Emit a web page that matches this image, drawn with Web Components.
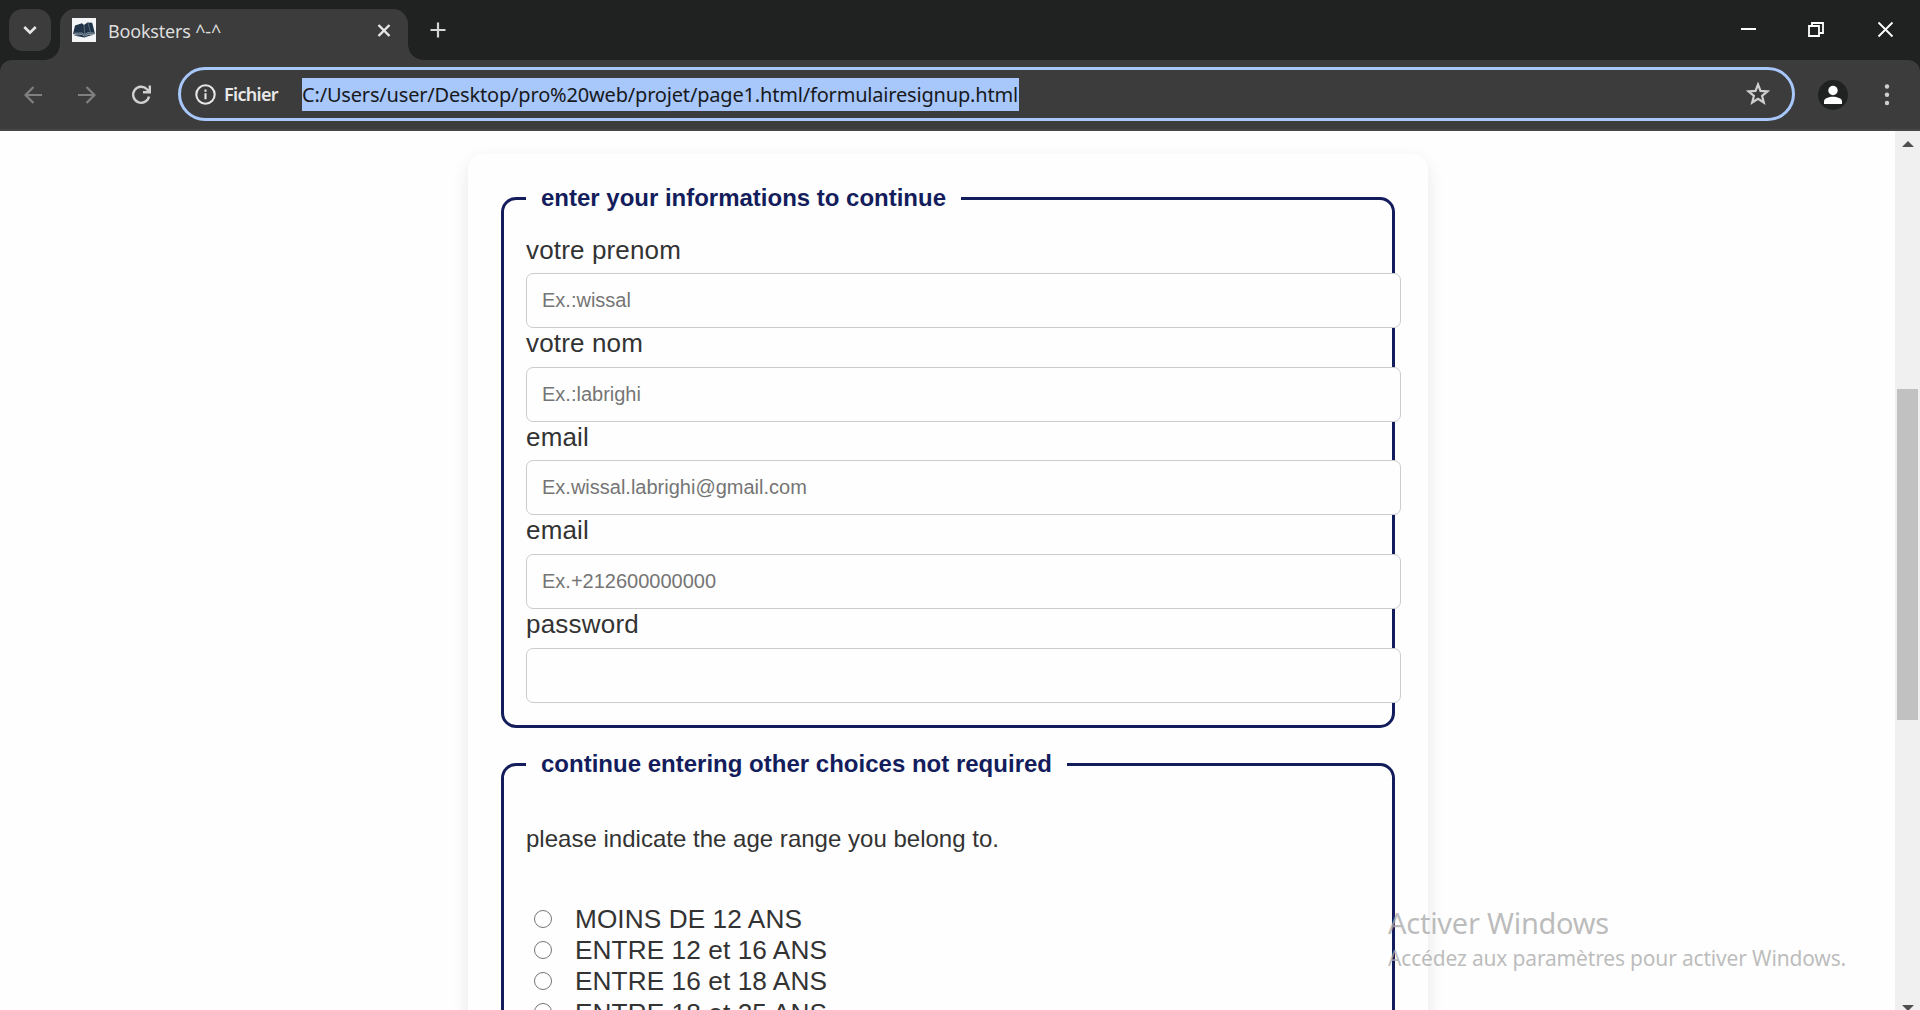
<!DOCTYPE html>
<html lang="fr">
<head>
<meta charset="utf-8">
<title>Booksters ^-^</title>
<style>
html,body{margin:0;height:100%;overflow:hidden;background:#fefefe}
</style>
</head>
<body>
<browser-window></browser-window>
<script>
class BaseElement extends HTMLElement {
  constructor() {
    super();
    this.attachShadow({ mode: 'open' }).innerHTML = this.constructor.markup;
  }
}

/* One line of text whose tracking is adjusted to fill the width given in "w". */
class FitText extends BaseElement {
  static markup = `<style>:host{display:block;white-space:nowrap}span{display:inline-block}</style><span><slot></slot></span>`;
  connectedCallback() {
    const span = this.shadowRoot.querySelector('span');
    const fit = () => {
      const n = this.textContent.length, w = +this.getAttribute('w');
      span.style.letterSpacing = '0px';
      const natural = span.getBoundingClientRect().width;
      if (natural) span.style.letterSpacing = (w - natural) / n + 'px';
    };
    fit();
    requestAnimationFrame(fit);
  }
}

class TabStrip extends BaseElement {
  static markup = `<style>
  :host{display:flex;height:60px;background:#202221;box-sizing:border-box;padding-left:9px;font-family:"Noto Sans",sans-serif;color:#dedede}
  .search{width:42px;height:42px;margin-top:9px;border-radius:14px;background:#3c3c3c;flex:none}
  .tab{position:relative;width:348px;height:51px;margin:9px 0 0 9px;border-radius:15px 15px 0 0;background:#3c3c3c;display:flex;box-sizing:border-box;padding:9px 15px 0 12px;flex:none}
  .tab::before,.tab::after{content:"";position:absolute;bottom:0;width:15px;height:15px}
  .tab::before{left:-15px;background:radial-gradient(circle at 0 0,transparent 14.5px,#3c3c3c 15px)}
  .tab::after{right:-15px;background:radial-gradient(circle at 100% 0,transparent 14.5px,#3c3c3c 15px)}
  .title{font-size:18px;line-height:24px;margin:1px 0 0 12px;flex:1}
  svg{display:block;flex:none}
  .close{margin:5px 0 0}
  .plus{margin:22px 0 0 22px}
  .win{margin-left:auto;display:flex;padding:21px 26px 0 0;gap:52px}
  .win svg:first-child{margin-right:-1px}
  </style>
  <div class="search"><svg width="42" height="42" fill="none" stroke="#e6e6e6" stroke-width="2.6"><path d="M15.3 18l5.7 5.7 5.7-5.7"/></svg></div>
  <div class="tab">
    <svg width="24" height="24" viewBox="0 0 24 24"><path fill="#f3f5f6" d="M0 0h24v24H0z"/><path fill="#1f3448" d="M3 7.5l7-2.2 2 1.7 3.4-2.5 4.8.3 2.8 11-7.3 1-3.3 2L1 16z"/><path d="M2.2 15.3l7.4-.3 2.8 1.7 3.4-2 6.7.4M2 17.2l7.5-.7 3 1.6 3.5-1.8 6.5 0" fill="none" stroke="#b8c4cd" stroke-width=".7"/><path d="M12 7l.6 9M16 5l2.5 9" stroke="#6d8191" stroke-width=".7"/><path fill="#1f3448" d="M1.5 17.4l8-.3 3 1.3 3.5-1.5 6.5-.3-6.5 1.6-3.5 1.2z"/></svg>
    <fit-text class="title" w="113">Booksters ^-^</fit-text>
    <svg class="close" width="18" height="18" fill="none" stroke="#e8e8e8" stroke-width="2.4"><path d="M3.5 2l11 11M14.5 2l-11 11"/></svg>
  </div>
  <svg class="plus" width="16" height="16" fill="none" stroke="#d5d5d5" stroke-width="2.2"><path d="M8 .5v15M.5 8h15"/></svg>
  <div class="win">
    <svg width="17" height="17"><path d="M1 7h15v2H1z" fill="#fff"/></svg>
    <svg width="17" height="17" fill="none" stroke="#fff" stroke-width="1.8"><path d="M1 5h10v10H1zM4 5V2h11v10h-4"/></svg>
    <svg width="17" height="17" fill="none" stroke="#fff" stroke-width="1.8"><path d="M1.5 1.5l14 14M15.5 1.5l-14 14"/></svg>
  </div>`;
}

class NavBar extends BaseElement {
  static markup = `<style>
  :host{display:block;background:#202221;font-family:"Noto Sans",sans-serif}
  .bar{height:71px;background:#3c3c3c;border-bottom:2px solid #474747;border-radius:12px 12px 0 0;box-sizing:border-box;display:flex;padding-top:7px}
  svg{display:block;flex:none}
  .nav{display:flex;margin:19px 0 0 24px;gap:34px}
  .nav svg:last-child{margin:-1px -1px 0 1px}
  .omni{margin-left:26px;width:1617px;height:54px;box-sizing:border-box;border:3px solid #a8c7fa;border-radius:27px;display:flex;align-items:center;padding:0 21px 0 14px}
  .file{margin-left:8px;font-size:18px;font-weight:600;color:#e8e8e8;width:78px;line-height:26px}
  .url{background:#a8c7fa;color:#17191d;font-size:20px;height:33px;line-height:33px;width:717px}
  .star{margin-left:auto}
  .avatar{margin:13px 0 0 23px}
  .dots{margin:16px 0 0 35px}
  </style>
  <div class="bar">
    <div class="nav">
      <svg width="19" height="18" fill="none" stroke="#808080" stroke-width="2.2"><path d="M18 9H2M9.500 1L1.500 9l8 8"/></svg>
      <svg width="19" height="18" fill="none" stroke="#808080" stroke-width="2.200"><path d="M1 9h16M9.500 1l8 8-8 8"/></svg>
      <svg width="22" height="20" fill="none" stroke="#d0d0d0" stroke-width="2.4"><path d="M18 11.500a8 8 0 1 1-2-7.200l2.500 2.500M18.800 .500v6.800H12"/></svg>
    </div>
    <div class="omni">
      <svg width="21" height="21" fill="none" stroke="#e6e6e6"><circle cx="10.500" cy="10.500" r="9.200" stroke-width="2.100"/><path d="M10.500 9.200v6M10.500 5.500v2.200" stroke-width="2.100"/></svg>
      <fit-text class="file" w="54">Fichier</fit-text>
      <fit-text class="url" w="716">C:/Users/user/Desktop/pro%20web/projet/page1.html/formulairesignup.html</fit-text>
      <svg class="star" width="26" height="26" fill="none" stroke="#cfcfcf" stroke-width="2.2"><path d="M13 3.500l2.500 6.400 6.900.5-5.300 4.400 1.700 6.700-5.800-3.700-5.800 3.700 1.700-6.700-5.300-4.400 6.900-.5z"/></svg>
    </div>
    <svg class="avatar" width="30" height="30"><circle cx="15" cy="15" r="15" fill="#202221"/><g fill="#fff"><circle cx="15" cy="10.500" r="4.700"/><path d="M6 24v-2.500c0-3.200 5-4.700 9-4.700s9 1.500 9 4.700V24z"/></g></svg>
    <svg class="dots" width="8" height="24" fill="#d0d0d0"><circle cx="4" cy="3.500" r="2.200"/><circle cx="4" cy="11.700" r="2.200"/><circle cx="4" cy="20" r="2.200"/></svg>
  </div>`;
}

class LabelledField extends BaseElement {
  static markup = `<style>
  :host{display:flex;flex-direction:column;height:93.600px}
  .label{font-size:26px;line-height:31px;height:38.600px}
  input{display:block;width:875px;height:55px;box-sizing:border-box;border:1px solid #ccc;border-radius:7px;padding:0 15px;background:#fefefe;font:20px "Liberation Sans",sans-serif;outline:0}
  input::placeholder{color:#757575}
  </style><fit-text class="label"></fit-text><input>`;
  connectedCallback() {
    const label = this.shadowRoot.querySelector('.label');
    label.textContent = this.getAttribute('label');
    label.setAttribute('w', this.getAttribute('w'));
    this.shadowRoot.querySelector('input').placeholder = this.getAttribute('hint') || '';
  }
}

class FormSection extends BaseElement {
  static markup = `<style>
  :host{display:block}
  .box{width:894px;height:100%;box-sizing:border-box;border:3px solid #141d5c;border-radius:15px;padding:0 22px}
  .legend{width:max-content;background:#fefefe;padding:0 15px;margin-top:-17px;height:30px;line-height:30px;font-size:24px;font-weight:700;color:#141d5c}
  </style><div class="box"><div class="legend"><slot name="legend"></slot></div><slot></slot></div>`;
}

class AgeOption extends BaseElement {
  static markup = `<style>
  :host{display:flex;align-items:center;height:31.200px;font-size:26.200px;line-height:31px}
  i{width:18px;height:18px;box-sizing:border-box;border:1.500px solid #767676;border-radius:50%;margin:0 23px 0 8px;background:#fff;margin-top:-2px}
  </style><i></i><slot></slot>`;
}

class SignupForm extends BaseElement {
  static markup = `<style>
  :host{display:block;width:960px;height:1100px;box-sizing:border-box;margin-left:468px;padding:43px 33px;border-radius:15px;background:#fefefe;box-shadow:0 6px 18px rgba(0,0,0,.09);font-family:"Liberation Sans",sans-serif;color:#333}
  .one{height:531px}
  .two{height:520px;margin-top:35px}
  .fields{padding-top:21.600px}
  .ask{font-size:24px;line-height:28px;margin:46px 0 51px}
  </style>
  <form-section class="one">
    <fit-text slot="legend" w="405">enter your informations to continue</fit-text>
    <div class="fields">
      <labelled-field label="votre prenom" hint="Ex.:wissal" w="155"></labelled-field>
      <labelled-field label="votre nom" hint="Ex.:labrighi" w="117"></labelled-field>
      <labelled-field label="email" hint="Ex.wissal.labrighi@gmail.com" w="63"></labelled-field>
      <labelled-field label="email" hint="Ex.+212600000000" w="63"></labelled-field>
      <labelled-field label="password" w="113"></labelled-field>
    </div>
  </form-section>
  <form-section class="two">
    <fit-text slot="legend" w="511">continue entering other choices not required</fit-text>
    <fit-text class="ask" w="473">please indicate the age range you belong to.</fit-text>
    <age-option><fit-text w="227">MOINS DE 12 ANS</fit-text></age-option>
    <age-option><fit-text w="252">ENTRE 12 et 16 ANS</fit-text></age-option>
    <age-option><fit-text w="252">ENTRE 16 et 18 ANS</fit-text></age-option>
    <age-option><fit-text w="252">ENTRE 18 et 25 ANS</fit-text></age-option>
  </form-section>`;
}

class ScrollBar extends BaseElement {
  static markup = `<style>
  :host{display:flex;flex-direction:column;align-items:center;width:25px;background:#f0f0f0}
  .up{margin-top:10px}
  .thumb{width:21px;height:331px;background:#c1c1c1;margin-top:242px}
  .down{margin-top:auto}
  svg{display:block}
  </style><svg class="up" width="12" height="6"><path d="M0 6L6 0l6 6z" fill="#505050"/></svg><div class="thumb"></div><svg class="down" width="12" height="5"><path d="M0 0h12L7 5H5z" fill="#505050"/></svg>`;
}

class ActivationNotice extends BaseElement {
  static markup = `<style>
  :host{position:absolute;left:1388px;top:901px;font-family:"Noto Sans",sans-serif;color:rgba(170,170,170,.78)}
  .a{font-size:29px;line-height:43px}
  .b{font-size:21px;line-height:28px}
  </style><fit-text class="a" w="221">Activer Windows</fit-text><fit-text class="b" w="458">Accédez aux paramètres pour activer Windows.</fit-text>`;
}

class BrowserWindow extends BaseElement {
  static markup = `<style>
  :host{display:flex;flex-direction:column;width:1920px;height:1010px;overflow:hidden;position:relative}
  .page{display:flex;height:879px;overflow:hidden}
  .view{flex:1;overflow:hidden;background:#fefefe}
  .view signup-form{margin-top:23px}
  tab-strip,nav-bar{flex:none}
  </style><tab-strip></tab-strip><nav-bar></nav-bar><div class="page"><div class="view"><signup-form></signup-form></div><scroll-bar></scroll-bar></div><activation-notice></activation-notice>`;
}

customElements.define('fit-text', FitText);
customElements.define('tab-strip', TabStrip);
customElements.define('nav-bar', NavBar);
customElements.define('labelled-field', LabelledField);
customElements.define('form-section', FormSection);
customElements.define('age-option', AgeOption);
customElements.define('signup-form', SignupForm);
customElements.define('scroll-bar', ScrollBar);
customElements.define('activation-notice', ActivationNotice);
customElements.define('browser-window', BrowserWindow);
</script>
</body>
</html>
